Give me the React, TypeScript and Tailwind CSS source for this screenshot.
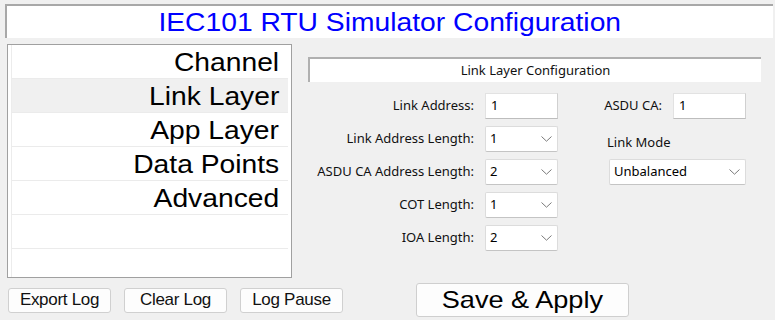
import React from "react";

const Chevron = () => (
  <svg width="11" height="6" viewBox="0 0 11 6" className="shrink-0">
    <polyline points="0.5,0.5 5.5,5.2 10.5,0.5" fill="none" stroke="#7a7a7a" strokeWidth="1" />
  </svg>
);

const Select = ({ value, w = "w-[73px]" }: { value: string; w?: string }) => (
  <div className={`${w} h-[26px] bg-white border border-[#dcdcdc] border-b-[#c4c4c4] rounded-[2px] flex items-center justify-between pl-[4px] pr-[5px] text-[13px] text-black`}>
    <span>{value}</span>
    <Chevron />
  </div>
);

const Input = ({ value }: { value: string }) => (
  <div className="w-[73px] h-[26px] bg-white border border-[#e2e2e2] border-b-[#bdbdbd] border-r-[#d0d0d0] flex items-center pl-[5px] text-[13px] text-black">
    {value}
  </div>
);

const Label = ({ children }: { children: React.ReactNode }) => (
  <div className="w-[166px] text-right text-[13px] text-[#111] whitespace-nowrap">{children}</div>
);

const rows = ["Channel", "Link Layer", "App Layer", "Data Points", "Advanced", "", ""];

export default function App() {
  return (
    <div className="w-[775px] h-[320px] bg-[#f0f0f0] overflow-hidden font-['Noto_Sans',sans-serif]">
      {/* Title */}
      <div className="pt-[4px] pl-[5px]">
        <div className="w-[768px] h-[34px] bg-white border-t-2 border-l-2 border-[#a8a8a8] flex items-center justify-center">
          <span className="inline-block scale-x-[1.13] text-[25px] leading-none text-[#0000ff] font-['Liberation_Sans',Arial,sans-serif]">
            IEC101 RTU Simulator Configuration
          </span>
        </div>
      </div>

      {/* Main */}
      <div className="flex mt-[6px] h-[234px]">
        {/* list */}
        <div className="ml-[7px] w-[285px] h-[234px] border border-[#a0a0a0] bg-white flex">
          <div className="w-[4px] border-r border-[#ececec]" />
          <div className="flex-1 flex flex-col pr-[3px]">
            {rows.map((r, i) => (
              <div
                key={i}
                className={`${i === 6 ? "h-[28px]" : "h-[34px] border-b border-[#ebebeb]"} ${i === 1 ? "bg-[#f0f0f0]" : "bg-white"} flex items-center justify-end pr-[9px] pt-[2px]`}
              >
                <span className="inline-block origin-right scale-x-[1.13] text-[25px] leading-none text-black font-['Liberation_Sans',Arial,sans-serif]">
                  {r}
                </span>
              </div>
            ))}
          </div>
        </div>

        {/* right panel */}
        <div className="ml-[16px] w-[453px] pt-[13px]">
          <div className="h-[25px] bg-white border-t-2 border-l-2 border-[#b0b0b0] flex items-center justify-center text-[13px] text-[#111]">
            Link Layer Configuration
          </div>
          <div className="flex mt-[11px]">
            <div className="flex flex-col gap-[7px]">
              <div className="flex items-center gap-[11px]">
                <Label>Link Address:</Label>
                <Input value="1" />
              </div>
              <div className="flex items-center gap-[11px]">
                <Label>Link Address Length:</Label>
                <Select value="1" />
              </div>
              <div className="flex items-center gap-[11px]">
                <Label>ASDU CA Address Length:</Label>
                <Select value="2" />
              </div>
              <div className="flex items-center gap-[11px]">
                <Label>COT Length:</Label>
                <Select value="1" />
              </div>
              <div className="flex items-center gap-[11px]">
                <Label>IOA Length:</Label>
                <Select value="2" />
              </div>
            </div>
            <div className="ml-[37px] w-[151px] flex flex-col gap-[7px]">
              <div className="flex items-center justify-end gap-[11px] h-[26px]">
                <span className="text-[13px] text-[#111] whitespace-nowrap">ASDU CA:</span>
                <Input value="1" />
              </div>
              <div className="h-[26px] flex items-end pb-[0px] pl-[12px] text-[13px] text-[#111]">Link Mode</div>
              <div className="pl-[14px]">
                <Select value="Unbalanced" w="w-[137px]" />
              </div>
            </div>
          </div>
        </div>
      </div>

      {/* Bottom */}
      <div className="flex items-center mt-[5px] h-[34px]">
        <div className="ml-[8px] flex gap-[13px]">
          {["Export Log", "Clear Log", "Log Pause"].map((b) => (
            <div
              key={b}
              className="w-[103px] h-[25px] bg-[#fdfdfd] border border-[#d0d0d0] rounded-[3px] flex items-center justify-center text-[17px] tracking-[-0.3px] text-[#111] font-['Liberation_Sans',Arial,sans-serif]"
            >
              {b}
            </div>
          ))}
        </div>
        <div className="ml-[73px] w-[213px] h-[34px] bg-[#fdfdfd] border border-[#cfcfcf] rounded-[3px] flex items-center justify-center">
          <span className="inline-block scale-x-[1.13] text-[24px] leading-none text-black font-['Liberation_Sans',Arial,sans-serif]">
            Save &amp; Apply
          </span>
        </div>
      </div>
    </div>
  );
}
